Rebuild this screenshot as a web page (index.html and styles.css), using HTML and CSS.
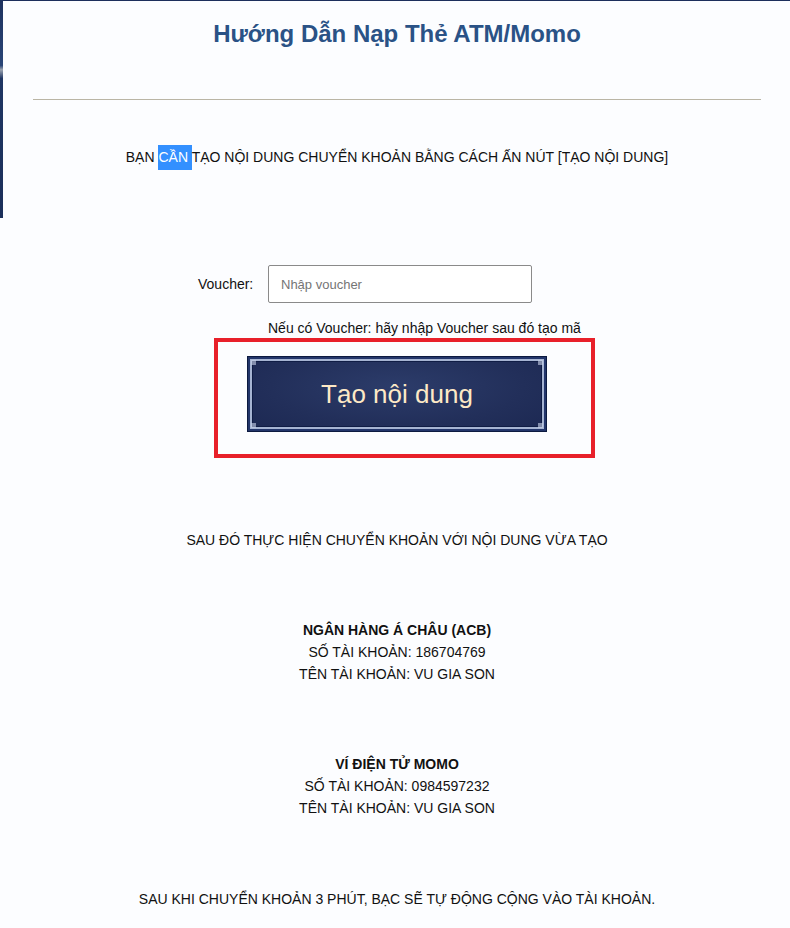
FILE: index.html
```html
<!DOCTYPE html>
<html lang="vi">
<head>
    <meta charset="UTF-8">
    <meta name="viewport" content="width=device-width, initial-scale=1.0">
    <title>Hướng Dẫn Nạp Thẻ ATM/Momo</title>
    <link rel="stylesheet" href="styles.css">
</head>
<body>
    <div class="backdrop-edge"></div>

    <div class="panel">
        <h2 class="panel-title">Hướng Dẫn Nạp Thẻ ATM/Momo</h2>
        <hr class="divider">

        <p class="step step-first">BẠN <span class="selected">CẦN </span>TẠO NỘI DUNG CHUYỂN KHOẢN BẰNG CÁCH ẤN NÚT [TẠO NỘI DUNG]</p>

        <div class="voucher-form">
            <div class="voucher-row">
                <label for="voucher">Voucher:</label>
                <input type="text" id="voucher" placeholder="Nhập voucher">
            </div>
            <p class="voucher-note">Nếu có Voucher: hãy nhập Voucher sau đó tạo mã</p>
            <div class="highlight-box">
                <button class="create-button" type="button">Tạo nội dung</button>
            </div>
        </div>

        <p class="step step-after">SAU ĐÓ THỰC HIỆN CHUYỂN KHOẢN VỚI NỘI DUNG VỪA TẠO</p>

        <div class="account account-bank">
            <div class="account-name">NGÂN HÀNG Á CHÂU (ACB)</div>
            <div>SỐ TÀI KHOẢN: 186704769</div>
            <div>TÊN TÀI KHOẢN: VU GIA SON</div>
        </div>

        <div class="account account-momo">
            <div class="account-name">VÍ ĐIỆN TỬ MOMO</div>
            <div>SỐ TÀI KHOẢN: 0984597232</div>
            <div>TÊN TÀI KHOẢN: VU GIA SON</div>
        </div>

        <p class="step step-last">SAU KHI CHUYỂN KHOẢN 3 PHÚT, BẠC SẼ TỰ ĐỘNG CỘNG VÀO TÀI KHOẢN.</p>
    </div>
</body>
</html>
```

FILE: styles.css
```css
body {
    margin: 0;
    font-family: "Liberation Sans", Arial, sans-serif;
    font-size: 14px;
    color: #111;
    background-color: #fcfdff;
    border-top: 1px solid #1c2f5c;
    min-height: 927px;
}

/* strip of the dark page showing behind the modal */
.backdrop-edge {
    position: absolute;
    top: 0;
    left: 0;
    width: 3px;
    height: 218px;
    background: linear-gradient(#1d325f, #2a4577 30%, #9aa3b0 32%, #1f3663 36%, #1b2f5a);
}

.panel {
    padding-left: 4px;
    text-align: center;
}

.panel-title {
    margin: 0;
    padding-top: 19px;
    font-size: 24px;
    line-height: 28px;
    font-weight: bold;
    color: #2a5286;
}

.divider {
    margin: 51px 29px 0 29px;
    border: 0;
    border-top: 1px solid #bab5a5;
    height: 0;
}

.step {
    margin: 70px 0 0 0;
    line-height: 20px;
}

.step-first {
    margin-top: 47px;
}

.selected {
    background-color: #3390ff;
    color: #fff;
    padding: 4px 0 5px 0;
}

.voucher-form {
    width: 400px;
    margin: 98px auto 0 auto;
    text-align: left;
}

.voucher-row {
    display: flex;
    align-items: center;
}

.voucher-row label {
    width: 71px;
    padding-left: 1px;
    box-sizing: border-box;
}

.voucher-row input {
    width: 264px;
    height: 38px;
    box-sizing: border-box;
    padding: 0 12px;
    border: 1px solid #8a8a8a;
    border-radius: 2px;
    font-family: "Liberation Sans", Arial, sans-serif;
    font-size: 13px;
    color: #333;
    background: #fff;
}

.voucher-row input::placeholder {
    color: #757575;
}

.voucher-note {
    margin: 15px 0 0 71px;
    line-height: 20px;
}

.highlight-box {
    width: 381px;
    box-sizing: border-box;
    margin-left: 17px;
    border: 4px solid #e8202a;
    padding: 14px 0 22px 29px;
}

.create-button {
    display: block;
    position: relative;
    width: 300px;
    height: 76px;
    border: 1px solid #0c1a40;
    border-radius: 0;
    background:
        radial-gradient(ellipse at 50% 40%, #2c3c6a 0%, #222f5a 60%, #1c2852 100%);
    box-shadow:
        inset 0 0 0 2px #22356a,
        inset 0 0 0 4px #a6b4d2,
        inset 0 0 0 5px #101d45;
    color: #fde9c6;
    font-family: "Liberation Sans", Arial, sans-serif;
    font-size: 26px;
    line-height: 30px;
    padding: 0;
    cursor: pointer;
}

.create-button::before,
.create-button::after {
    content: "";
    position: absolute;
    top: 3px;
    bottom: 3px;
    width: 5px;
    background:
        linear-gradient(#c8d2e8, #c8d2e8) top / 5px 5px no-repeat,
        linear-gradient(#c8d2e8, #c8d2e8) bottom / 5px 5px no-repeat;
    opacity: 0.6;
}

.create-button::before {
    left: 3px;
}

.create-button::after {
    right: 3px;
}

.step-after {
    margin-top: 72px;
}

.account {
    line-height: 22px;
}

.account-bank {
    margin-top: 69px;
}

.account-momo {
    margin-top: 68px;
}

.account-name {
    font-weight: bold;
}

.step-last {
    margin-top: 70px;
}
```
